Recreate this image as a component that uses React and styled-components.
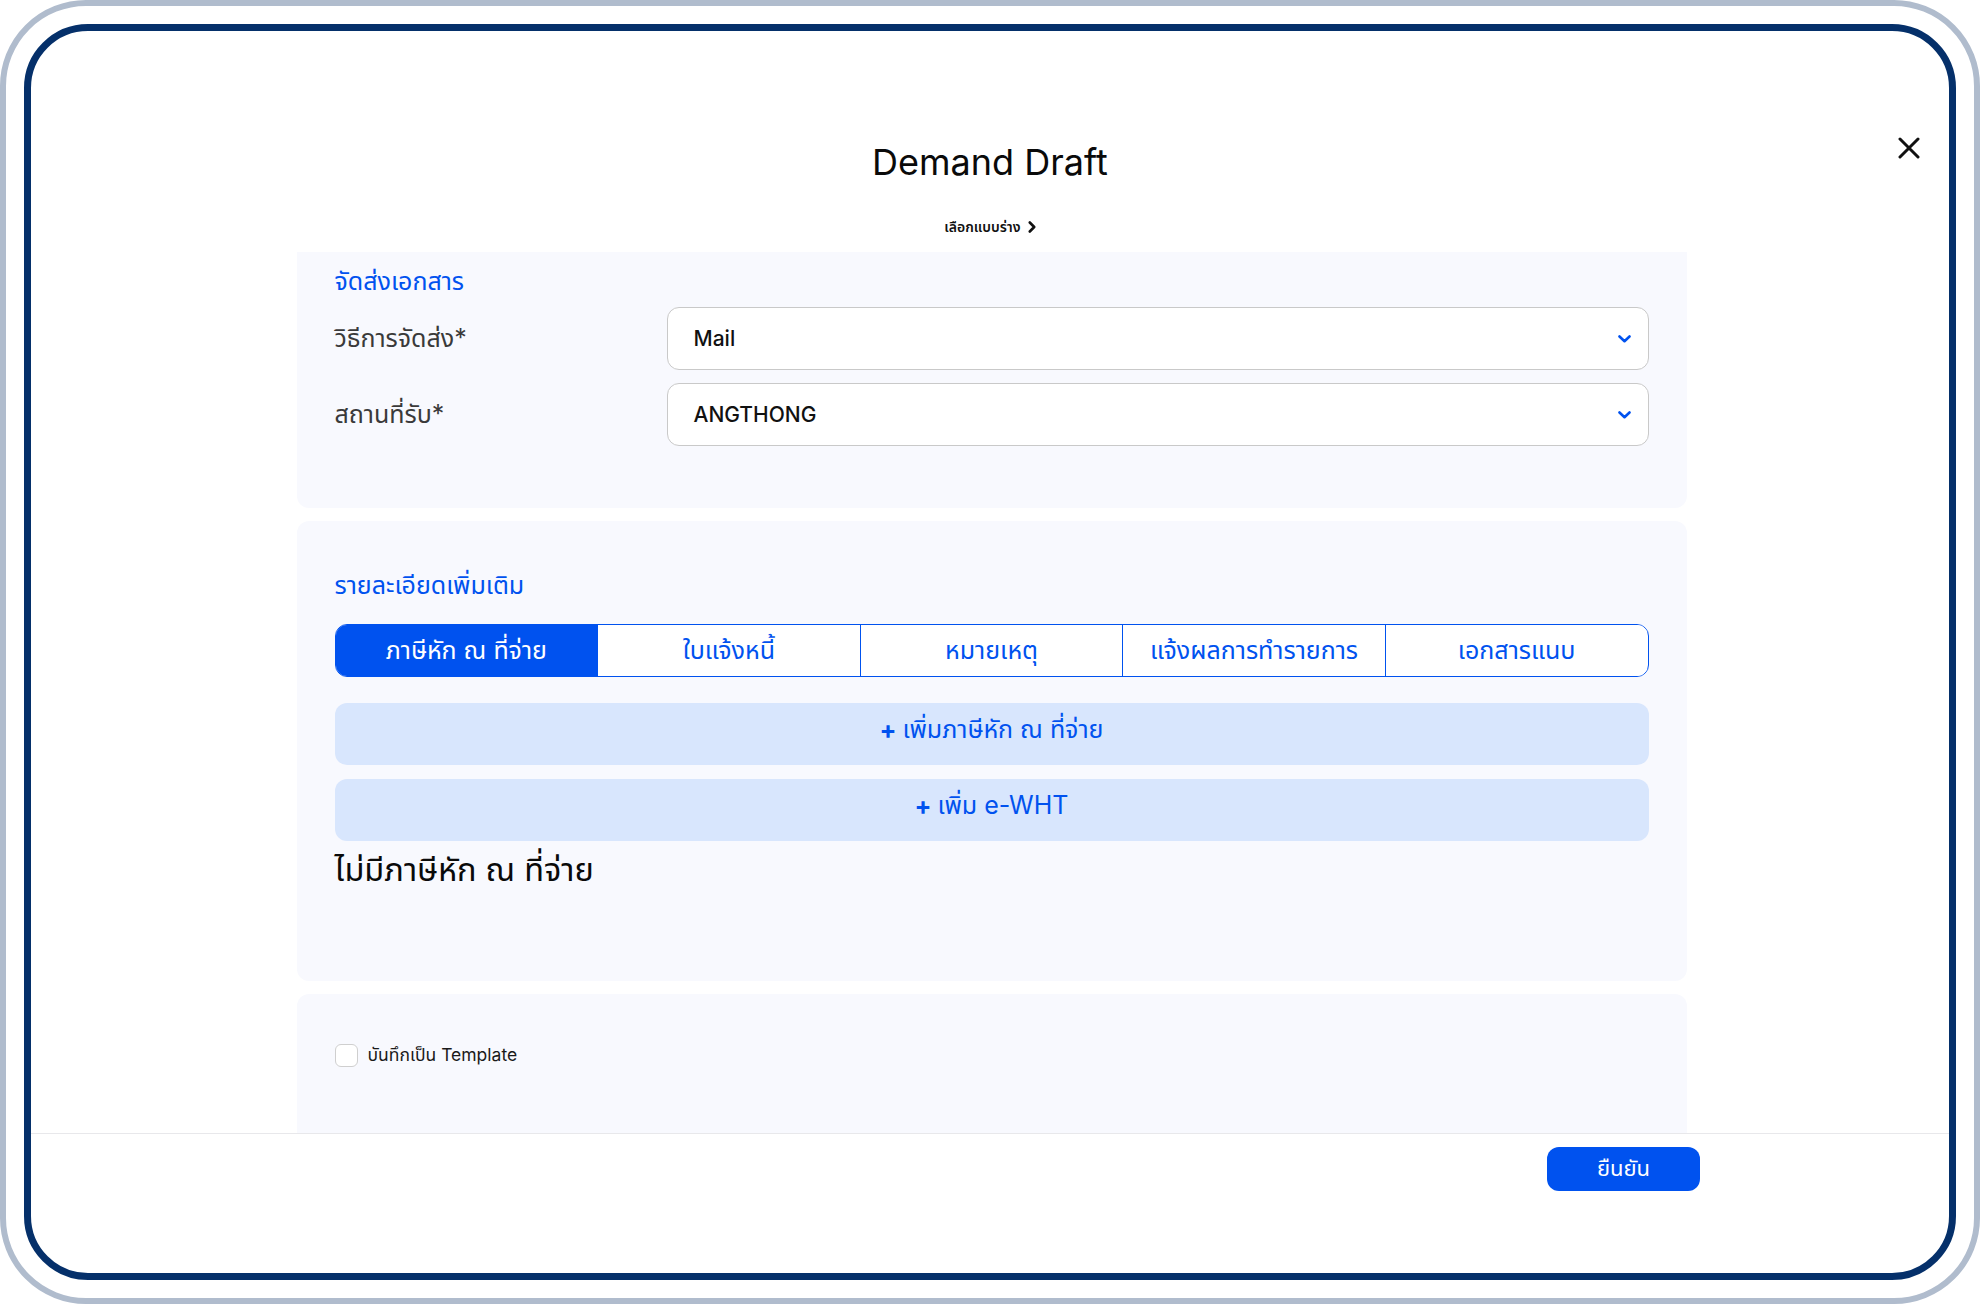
import React from "react";
import styled, { createGlobalStyle } from "styled-components";

const colors = {
  blue: "#0052ef",
  navy: "#05306a",
  frame: "#b0bccd",
  panel: "#f8f9fe",
  softBlue: "#d8e6fd",
  line: "#c9c9c9",
  text: "#111111",
  label: "#3a3a3a",
};

const FONT = `"Inter", "Noto Sans Thai", "Noto Sans", sans-serif`;

const GlobalStyle = createGlobalStyle`
  html, body {
    margin: 0;
    padding: 0;
    background: #ffffff;
  }
  body {
    font-family: ${FONT};
    color: ${colors.text};
  }
  * {
    box-sizing: border-box;
  }
`;

const tabs = [
  "ภาษีหัก ณ ที่จ่าย",
  "ใบแจ้งหนี้",
  "หมายเหตุ",
  "แจ้งผลการทำรายการ",
  "เอกสารแนบ",
];

const ChevronDown = () => (
  <svg width="13" height="8" viewBox="0 0 13 8" fill="none">
    <path
      d="M1.5 1.5 L6.5 6.2 L11.5 1.5"
      stroke={colors.blue}
      strokeWidth="2.6"
      strokeLinecap="round"
      strokeLinejoin="round"
    />
  </svg>
);

const SelectField = ({ value }) => (
  <SelectBox>
    <SelectValue>{value}</SelectValue>
    <ChevronDown />
  </SelectBox>
);

const App = () => {
  return (
    <>
      <GlobalStyle />
      <Device>
        <Screen>
          <CloseButton aria-label="close">
            <svg width="22" height="22" viewBox="0 0 22 22" fill="none">
              <path
                d="M2 2 L20 20 M20 2 L2 20"
                stroke="#111"
                strokeWidth="3"
                strokeLinecap="round"
              />
            </svg>
          </CloseButton>

          <Header>
            <Title>Demand Draft</Title>
            <DraftLink>
              เลือกแบบร่าง
              <svg width="8" height="12" viewBox="0 0 8 12" fill="none">
                <path
                  d="M1.8 1.5 L6.2 6 L1.8 10.5"
                  stroke="#111"
                  strokeWidth="2.6"
                  strokeLinecap="round"
                  strokeLinejoin="round"
                />
              </svg>
            </DraftLink>
          </Header>

          <ScrollArea>
            <Panel $clipped $pt={13} $pb={62}>
              <SectionTitle>จัดส่งเอกสาร</SectionTitle>
              <FormRows>
                <FormRow>
                  <FieldLabel>วิธีการจัดส่ง*</FieldLabel>
                  <SelectField value="Mail" />
                </FormRow>
                <FormRow>
                  <FieldLabel>สถานที่รับ*</FieldLabel>
                  <SelectField value="ANGTHONG" />
                </FormRow>
              </FormRows>
            </Panel>

            <Panel $pt={48} $pb={91}>
              <SectionTitle>รายละเอียดเพิ่มเติม</SectionTitle>
              <TabBar>
                {tabs.map((t, i) => (
                  <Tab key={t} $active={i === 0}>
                    {t}
                  </Tab>
                ))}
              </TabBar>
              <AddButton $mt={26}>
                <Plus>+</Plus> เพิ่มภาษีหัก ณ ที่จ่าย
              </AddButton>
              <AddButton $mt={14}>
                <Plus>+</Plus> เพิ่ม e-WHT
              </AddButton>
              <EmptyText>ไม่มีภาษีหัก ณ ที่จ่าย</EmptyText>
            </Panel>

            <Panel $pt={50} $pb={80}>
              <CheckRow>
                <CheckBox />
                <CheckLabel>บันทึกเป็น Template</CheckLabel>
              </CheckRow>
            </Panel>
          </ScrollArea>

          <Footer>
            <ConfirmButton>ยืนยัน</ConfirmButton>
          </Footer>
        </Screen>
      </Device>
    </>
  );
};

export default App;

const Device = styled.div`
  width: 1980px;
  height: 1304px;
  border: 6px solid ${colors.frame};
  border-radius: 86px;
  padding: 18px;
  background: #ffffff;
`;

const Screen = styled.div`
  position: relative;
  height: 100%;
  border: 7px solid ${colors.navy};
  border-radius: 64px;
  overflow: hidden;
  display: flex;
  flex-direction: column;
  background: #ffffff;
`;

const CloseButton = styled.button`
  position: absolute;
  top: 106px;
  right: 29px;
  width: 22px;
  height: 22px;
  padding: 0;
  border: none;
  background: none;
  display: flex;
`;

const Header = styled.div`
  display: flex;
  flex-direction: column;
  align-items: center;
  padding-top: 109px;
  padding-bottom: 15px;
`;

const Title = styled.h1`
  margin: 0;
  font-size: 36px;
  line-height: 44px;
  font-weight: 400;
  color: #0a0a0a;
`;

const DraftLink = styled.div`
  margin-top: 33px;
  display: flex;
  align-items: center;
  gap: 7px;
  font-size: 14px;
  line-height: 20px;
  font-weight: 600;
  color: #111;
`;

const ScrollArea = styled.div`
  flex: 1;
  overflow: hidden;
  display: flex;
  flex-direction: column;
  align-items: center;
  gap: 13px;
  padding-left: 3px;
`;

const Panel = styled.div`
  flex-shrink: 0;
  width: 1390px;
  background: ${colors.panel};
  border-radius: ${({ $clipped }) => ($clipped ? "0 0 12px 12px" : "12px")};
  padding: ${({ $pt }) => $pt}px 38px ${({ $pb }) => $pb}px;
  display: flex;
  flex-direction: column;
`;

const SectionTitle = styled.div`
  font-size: 25px;
  line-height: 32px;
  color: ${colors.blue};
`;

const FormRows = styled.div`
  margin-top: 10px;
  display: flex;
  flex-direction: column;
  gap: 13px;
`;

const FormRow = styled.div`
  display: flex;
  align-items: center;
`;

const FieldLabel = styled.div`
  width: 332px;
  flex-shrink: 0;
  font-size: 25px;
  color: ${colors.label};
`;

const SelectBox = styled.div`
  flex: 1;
  height: 63px;
  display: flex;
  align-items: center;
  justify-content: space-between;
  padding: 0 17px 0 26px;
  background: #ffffff;
  border: 1.5px solid ${colors.line};
  border-radius: 12px;
`;

const SelectValue = styled.span`
  font-size: 21px;
  font-weight: 500;
  color: ${colors.text};
`;

const TabBar = styled.div`
  margin-top: 23px;
  display: flex;
  height: 53px;
  border: 1.5px solid ${colors.blue};
  border-radius: 12px;
  overflow: hidden;
  background: #ffffff;
`;

const Tab = styled.div`
  flex: 1;
  display: flex;
  align-items: center;
  justify-content: center;
  font-size: 25px;
  color: ${({ $active }) => ($active ? "#ffffff" : colors.blue)};
  background: ${({ $active }) => ($active ? colors.blue : "#ffffff")};
  & + & {
    border-left: 1.5px solid ${colors.blue};
  }
`;

const AddButton = styled.div`
  margin-top: ${({ $mt }) => $mt}px;
  height: 62px;
  padding-bottom: 8px;
  display: flex;
  align-items: center;
  justify-content: center;
  gap: 6px;
  background: ${colors.softBlue};
  border-radius: 12px;
  font-size: 25px;
  color: ${colors.blue};
`;

const Plus = styled.span`
  font-weight: 700;
`;

const EmptyText = styled.div`
  margin-top: 9px;
  font-size: 32.5px;
  line-height: 40px;
  font-weight: 400;
  color: #0a0a0a;
`;

const CheckRow = styled.div`
  display: flex;
  align-items: center;
  gap: 10px;
  height: 23px;
`;

const CheckBox = styled.span`
  width: 23px;
  height: 23px;
  border: 1.5px solid #cfcfcf;
  border-radius: 6px;
  background: #ffffff;
`;

const CheckLabel = styled.span`
  font-size: 17.5px;
  color: #1a1a1a;
`;

const Footer = styled.div`
  height: 140px;
  flex-shrink: 0;
  border-top: 1px solid #e8e8eb;
  display: flex;
  justify-content: flex-end;
  align-items: flex-start;
  padding: 13px 249px 0 0;
`;

const ConfirmButton = styled.button`
  width: 153px;
  height: 44px;
  border: none;
  border-radius: 12px;
  background: ${colors.blue};
  color: #ffffff;
  font-family: ${FONT};
  font-size: 22px;
`;
